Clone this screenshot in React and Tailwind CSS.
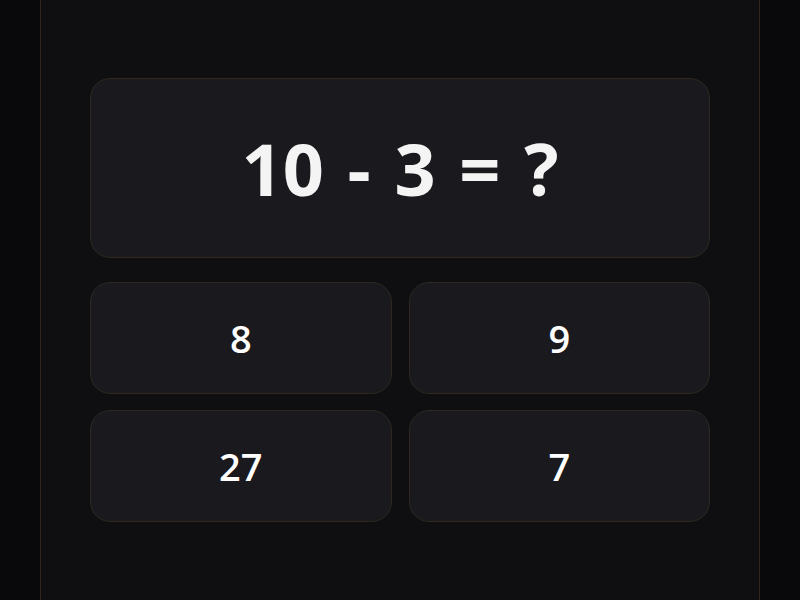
import React from 'react';

const answers = ['8', '9', '27', '7'];

export default function App() {
  return (
    <div className="min-h-screen w-full bg-[#09090b]" style={{ fontFamily: '"Open Sans", "Noto Sans", sans-serif' }}>
      <div className="mx-auto min-h-screen w-[720px] border-x border-[#30251c] bg-[#0f0f11] px-[49px] pt-[78px]">
        <div className="flex h-[180px] items-center justify-center rounded-[20px] border border-[#2e2820] bg-[#1a191d]">
          <h1 className="text-[72px] font-bold leading-none text-[#f4f4f5] [word-spacing:5px]">10 - 3 = ?</h1>
        </div>
        <div className="mt-[24px] grid grid-cols-2 gap-x-[17px] gap-y-4">
          {answers.map((a, i) => (
            <button
              key={i}
              className="flex h-[112px] items-center justify-center rounded-[20px] border border-[#2e2820] bg-[#1a191d] text-[38px] font-semibold text-white"
            >
              {a}
            </button>
          ))}
        </div>
      </div>
    </div>
  );
}
